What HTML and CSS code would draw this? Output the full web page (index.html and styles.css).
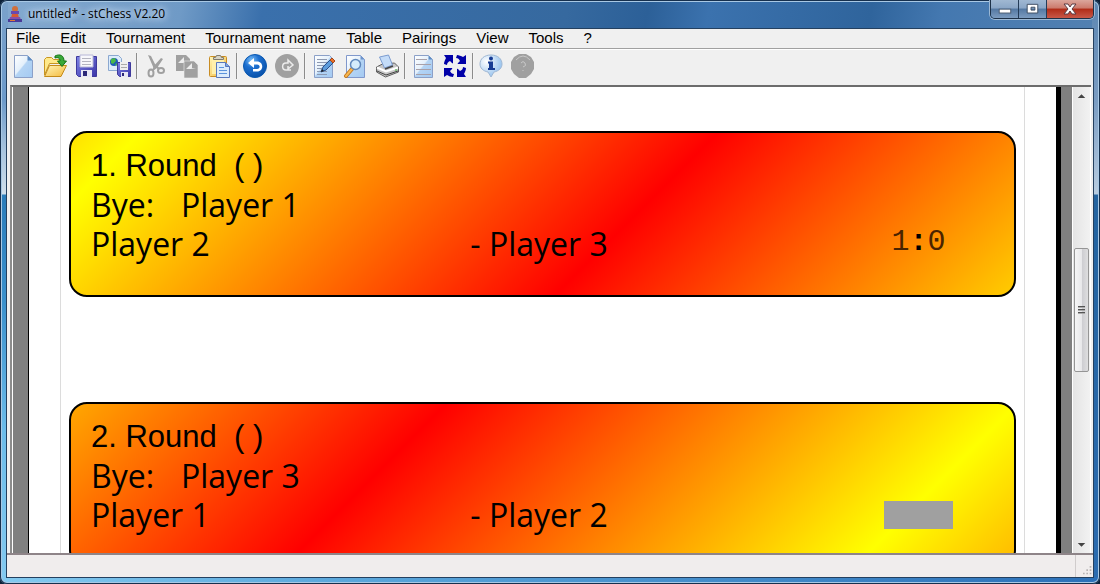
FILE: index.html
```html
<!DOCTYPE html>
<html lang="en">
<head>
<meta charset="utf-8">
<title>untitled* - stChess V2.20</title>
<link rel="stylesheet" href="styles.css">
</head>
<body>
<svg width="0" height="0" class="defs" aria-hidden="true">
  <defs>
    <linearGradient id="paper" x1="0" y1="0" x2="1" y2="1"><stop offset="0" stop-color="#fff"/><stop offset=".45" stop-color="#e4f0fb"/><stop offset=".5" stop-color="#b4d4f4"/><stop offset="1" stop-color="#a4caf2"/></linearGradient>
    <linearGradient id="gold" x1="0" y1="0" x2="1" y2="1"><stop offset="0" stop-color="#fff6b8"/><stop offset="1" stop-color="#f4b93c"/></linearGradient>
    <linearGradient id="violet" x1="0" y1="0" x2="1" y2="1"><stop offset="0" stop-color="#7f83e6"/><stop offset="1" stop-color="#3a35a8"/></linearGradient>
    <radialGradient id="ball" cx=".35" cy=".25" r=".8"><stop offset="0" stop-color="#7cc0f8"/><stop offset=".4" stop-color="#1d6fd0"/><stop offset="1" stop-color="#0850a8"/></radialGradient>
    <radialGradient id="bubble" cx=".3" cy=".3" r=".8"><stop offset="0" stop-color="#fff"/><stop offset="1" stop-color="#8cbcec"/></radialGradient>
  </defs>
</svg>
<div class="window">
  <header class="titlebar">
    <svg class="app-icon" viewBox="0 0 16 18" aria-hidden="true"><circle cx="8" cy="4" r="3" fill="#d0703c"/><path d="M4 6h8v3H4z" fill="#6a4ab0"/><path d="M5 9h6l1 4H4z" fill="#d85a34"/><path d="M3 12h10l1 3H2z" fill="#8a50a8"/><path d="M1 14h14v3H1z" fill="#4a3a98"/><path d="M3 15h5v1H3z" fill="#e07838"/></svg>
    <h1 class="title">untitled* - stChess V2.20</h1>
    <div class="controls">
      <button class="control" aria-label="Minimize"><svg viewBox="0 0 28 18"><rect x="8.500" y="9.500" width="12" height="4" fill="#fff" stroke="#4d5d72"/></svg></button>
      <button class="control" aria-label="Maximize"><svg viewBox="0 0 28 18"><path d="M8.500 4.500h11v9h-11zM12.500 7.500h4v3h-4z" fill="#fff" fill-rule="evenodd" stroke="#3d4d62"/></svg></button>
      <button class="control control-close" aria-label="Close"><svg viewBox="0 0 46 18"><path d="M17 4h4l2 3 2-3h4l-4 5 4 5h-4l-2-3-2 3h-4l4-5z" fill="#fff" stroke="#5a3a42"/></svg></button>
    </div>
  </header>
  <main class="client">
    <nav class="menu" aria-label="Main menu">
      <button>File</button><button>Edit</button><button>Tournament</button><button>Tournament name</button><button>Table</button><button>Pairings</button><button>View</button><button>Tools</button><button>?</button>
    </nav>
    <div class="toolbar" role="toolbar" aria-label="Tools">
      <button class="tool" aria-label="New"><svg viewBox="0 0 24 24"><path d="M3.500 1.500h13l5 5v17h-18z" fill="url(#paper)" stroke="#8ba0c8"/><path d="M16.500 1.500l5 5h-5z" fill="#5d8cc4"/></svg></button>
      <button class="tool" aria-label="Open"><svg viewBox="0 0 24 24"><path d="M1.500 21V5.500l2-2h5l2 2h7v4h-11z" fill="#ffe98a" stroke="#c89622"/><path d="M1.500 22.500l5-11h17l-5.500 11z" fill="url(#gold)" stroke="#c48a18"/><path d="M12 2c5-2.500 9-.5 9 5h2.500L19 12.500 14.500 7H17c0-3-2-4-5-3z" fill="#3aa83a" stroke="#157515"/></svg></button>
      <button class="tool" aria-label="Save"><svg viewBox="0 0 24 24"><path d="M1.500 2.500h20v20h-18l-2-2z" fill="url(#violet)" stroke="#3e399c"/><path d="M5 1h13v12H5z" fill="#f7f7fb" stroke="#b8b8d8"/><path d="M7 4.500h9M7 7.500h9M7 10.500h9" stroke="#b4b4c0"/><path d="M6 16h11v7H6z" fill="#e8e8f4"/><path d="M8 17h4v5H8z" fill="#2c2878"/></svg></button>
      <button class="tool" aria-label="Save as web page"><svg viewBox="0 0 24 24"><path d="M1.500 1.500h10l3 3v12h-13z" fill="#dcecfb" stroke="#8ba8d0"/><circle cx="7" cy="8" r="4" fill="#1c5cb4"/><path d="M4 5l4-1 1 3-3 3-2-1zM8 10l3-1-1 3z" fill="#48b848"/><path d="M10.500 8.500h13v14h-11l-2-2z" fill="url(#violet)" stroke="#3e399c"/><path d="M13 8h8v8h-8z" fill="#eee"/><path d="M14 10.500h6M14 13.500h6" stroke="#aaa"/><path d="M14 18h7v5h-7z" fill="#e8e8f4"/><path d="M15 19h2v3h-2z" fill="#2c2878"/></svg></button>
      <span class="sep"></span>
      <button class="tool" aria-label="Cut" disabled><svg viewBox="0 0 24 24"><path d="M5 1l3 1 5 10-2 3zM18 4l2 1-6 9-3 2-1-3z" fill="#a0a0a0"/><g fill="none" stroke="#a0a0a0" stroke-width="2"><ellipse cx="8" cy="19" rx="2.500" ry="3.500"/><ellipse cx="18" cy="16.500" rx="3" ry="2.500"/><path d="M10 16l3-4 3 3"/></g></svg></button>
      <button class="tool" aria-label="Copy" disabled><svg viewBox="0 0 24 24"><path d="M1 1h10l4 4v12H1z" fill="#a0a0a0"/><path d="M3 9l6-6v4h4l-5 2z" fill="#ededed"/><path d="M9 7h10l4 4v13H9z" fill="#a0a0a0" stroke="#eee" stroke-width=".6"/><path d="M11 15l6-6v5h4l-5 1z" fill="#ededed"/></svg></button>
      <button class="tool" aria-label="Paste"><svg viewBox="0 0 24 24"><rect x="2.500" y="2.500" width="17" height="20" rx="1" fill="url(#gold)" stroke="#c88c24"/><path d="M5 5h12v15H5z" fill="#fff0ac"/><path d="M6.500 5.500v-2h2l1-2h4l1 2h2v2z" fill="#d8d4c4" stroke="#807c70"/><path d="M9.500 8.500h9l4 4v11h-13z" fill="#dcecfc" stroke="#5878bc"/><path d="M18.500 8.500v4h4" fill="#7ca4e0" stroke="#5878bc"/><path d="M12 13.500h5M12 16.500h8M12 19.500h8" stroke="#5c94dc"/></svg></button>
      <span class="sep"></span>
      <button class="tool" aria-label="Undo"><svg viewBox="0 0 24 24"><circle cx="12" cy="12" r="11.500" fill="url(#ball)" stroke="#0a58b0"/><path d="M5 9l6-5v3.500h3c7 0 7 10 0 10h-4V15h4c3.500 0 3.500-4.500 0-4.500h-3V14z" fill="#fff"/></svg></button>
      <button class="tool" aria-label="Redo" disabled><svg viewBox="0 0 24 24"><circle cx="12" cy="12" r="12" fill="#a0a0a0"/><path d="M16 16h-5c-4.500 0-4.500-7 0-7h2V6l5 5-5 4v-3" fill="none" stroke="#ececec" stroke-width="1.500"/></svg></button>
      <span class="sep"></span>
      <button class="tool" aria-label="Edit"><svg viewBox="0 0 24 24"><path d="M3.500 1.500h15l3 3v19h-18z" fill="url(#paper)" stroke="#8ba0c8"/><path d="M6 5.500h10M6 8.500h10M6 11.500h8M6 14.500h6M6 17.500h10M6 20.500h10" stroke="#8c98b0"/><path d="M10 18l2-5 8-8 3 3-8 8z" fill="#5c9cdc" stroke="#28508c"/><path d="M19 6l2-2 3 3-2 2z" fill="#e8702c" stroke="#a84818"/><path d="M10 18l1-3 2 2z" fill="#222"/></svg></button>
      <button class="tool" aria-label="Print preview"><svg viewBox="0 0 24 24"><path d="M3.500 1.500h14l4 4v18h-18z" fill="url(#paper)" stroke="#8098cc"/><path d="M17.500 1.500l4 4h-4z" fill="#6c94cc"/><path d="M9 15l-6 7" stroke="#c47820" stroke-width="4" stroke-linecap="round"/><path d="M9 15l-6 7" stroke="#f8b850" stroke-width="2" stroke-linecap="round"/><circle cx="12.500" cy="10.500" r="5" fill="#d4ecfc" stroke="#6088bc" stroke-width="1.500"/></svg></button>
      <button class="tool" aria-label="Print"><svg viewBox="0 0 24 24"><path d="M1.500 13l6-3 12-1 4 4v5l-13 5-9-5z" fill="#c8c8c8" stroke="#606060"/><path d="M4.500 3l9-2 4 10-8 3z" fill="#c4dcf8" stroke="#7c9cd0"/><path d="M2 13.500l9 4 12-4" fill="none" stroke="#fff" stroke-width="2"/><path d="M2 17l9 4 12-4" fill="none" stroke="#444"/><path d="M10 15l8-3" stroke="#444" stroke-width="1.500"/><path d="M20 16h2" stroke="#40b840"/></svg></button>
      <span class="sep"></span>
      <button class="tool" aria-label="Report"><svg viewBox="0 0 24 24"><path d="M3.500 1.500h14l4 4v18h-18z" fill="url(#paper)" stroke="#8ba0c8"/><path d="M17.500 1.500l4 4h-4z" fill="#5d8cc4"/><path d="M5 5.500h11M5 10.500h15M5 15.500h15M5 20.500h15" stroke="#a8a0a8"/></svg></button>
      <button class="tool" aria-label="Refresh"><svg viewBox="0 0 24 24" fill="#0000a8"><path id="turn" d="M14 1c2 0 4 1 6 2l3-2v9h-9l3-3c-1-2-2-3-4-3z"/><use href="#turn" transform="rotate(90 12 12)"/><use href="#turn" transform="rotate(180 12 12)"/><use href="#turn" transform="rotate(270 12 12)"/><circle cx="12" cy="12" r="3.500" fill="#f0f0f0"/></svg></button>
      <span class="sep"></span>
      <button class="tool" aria-label="Info"><svg viewBox="0 0 24 24"><path d="M12 1c7 0 11 4 11 9 0 4-3 7-8 8l-3 5-3-5c-5-1-8-4-8-8 0-5 4-9 11-9z" fill="url(#bubble)" stroke="#a0b8d4"/><circle cx="12" cy="4.500" r="2" fill="#173c94"/><path d="M9 7.500h5V14h2v2H9v-2h1V9.500H9z" fill="#173c94"/></svg></button>
      <button class="tool" aria-label="Help" disabled><svg viewBox="0 0 24 24"><path d="M8 0h7l5 3 3 5v7l-3 5-5 4H8l-5-4-3-5V8l3-5z" fill="#a0a0a0"/><path d="M5 6q7-8 14 0M10 9q2-3 4 0t-2 4M12 16v1" fill="none" stroke="#c8c8c8"/></svg></button>
    </div>
    <section class="viewport" aria-label="Pairings sheet">
      <div class="desk">
        <div class="sheet">
          <div class="margins">
            <article class="round round-first">
              <h2 class="round-title">1. Round&nbsp; ( )</h2>
              <p class="line"><span class="bye">Bye:</span>Player 1</p>
              <div class="line pairing"><span>Player 2</span><span>- Player 3</span><span class="score">1<b>:</b>0</span></div>
            </article>
            <article class="round round-second">
              <h2 class="round-title">2. Round&nbsp; ( )</h2>
              <p class="line"><span class="bye">Bye:</span>Player 3</p>
              <div class="line pairing"><span>Player 1</span><span>- Player 2</span><input class="result" type="text" aria-label="Result of Player 1 against Player 2"></div>
            </article>
          </div>
        </div>
      </div>
      <div class="scrollbar">
        <button class="step" aria-label="Scroll up"><svg viewBox="0 0 16 18"><path d="M4 11l4-4 4 4z" fill="#444"/></svg></button>
        <div class="track"><div class="thumb"><i></i><i></i><i></i></div></div>
        <button class="step" aria-label="Scroll down"><svg viewBox="0 0 16 18"><path d="M4 8h8l-4 4z" fill="#444"/></svg></button>
      </div>
    </section>
    <footer class="status">
      <div class="grip"><svg viewBox="0 0 12 12" fill="#b8b4b4"><path d="M8 0h2v2H8zM4 4h2v2H4zM8 4h2v2H8zM0 8h2v2H0zM4 8h2v2H4zM8 8h2v2H8z"/></svg></div>
    </footer>
  </main>
</div>
</body>
</html>
```
FILE: styles.css
```css
* { box-sizing: border-box; }

body {
  margin: 0;
  background: #0c2038;
  font-family: "Liberation Sans", Arial, sans-serif;
  color: #000;
}

button {
  margin: 0;
  padding: 0;
  border: 0;
  background: none;
  font: inherit;
  color: inherit;
}

svg { display: block; }
.defs { position: absolute; }

/* Window frame */
.window {
  display: flex;
  flex-direction: column;
  height: 100vh;
  padding: 0 6px 6px;
  overflow: hidden;
  border-radius: 7px;
  box-shadow: inset 0 0 0 1px #16304e, inset 0 0 0 2px #a8c8e4;
  background:
    linear-gradient(90deg, #84caf0, #5ca8dc 30%, #2c70b8) bottom / 100% 7px no-repeat,
    linear-gradient(#7ba2cb, #6c9aca 100px, #a8c4de 150px, #cfdfec 194px, #2a7cba 195px, #3a90cc 300px, #6cbcea 430px, #84caf0) left / 8px 100% no-repeat,
    linear-gradient(#5c86b2, #7a9cc2 100px, #b8cce0 194px, #2464a0 195px, #2c6cb0) right / 8px 100% no-repeat,
    linear-gradient(100deg, #83a9cf, #6f9ac6 180px, #3a70ac 260px, #36699f 560px, #2c6098 640px, #3b72ae 700px, #2f649c 860px, #4478b0 930px, #5c86b2);
}

.titlebar {
  display: flex;
  align-items: flex-start;
  height: 28px;
  flex: none;
}

.app-icon { width: 16px; height: 18px; margin: 5px 0 0 1px; }

.title {
  flex: 1;
  margin: 6px 0 0 5px;
  font: 12px/16px "Open Sans", "Noto Sans", sans-serif;
  text-shadow: 0 0 6px #d4e4f4, 0 0 8px #c4d8ee, 0 0 10px #b4cce8;
}

.controls {
  display: flex;
  border: 1px solid #1d3148;
  border-top: 0;
  border-radius: 0 0 5px 5px;
  overflow: hidden;
  box-shadow: 0 0 0 1px #9cb8d4;
}

.control {
  width: 28px;
  height: 18px;
  border-right: 1px solid #243c58;
  background: linear-gradient(#a0b8d2, #8aa6c6 45%, #5478a2 50%, #7c9cc0);
}

.control-close {
  width: 46px;
  border-right: 0;
  background: linear-gradient(#dba69c, #cc7a6c 45%, #b02c18 50%, #c85848);
}

/* Client area */
.client {
  display: flex;
  flex: 1;
  flex-direction: column;
  min-height: 0;
  border: 1px solid #24405f;
  background: #f0f0f0;
}

.menu {
  display: flex;
  flex: none;
  gap: 20px;
  padding: 0 9px 1px;
  border-bottom: 1px solid #a0a0a0;
  font-size: 15px;
  line-height: 18px;
}

.toolbar {
  display: flex;
  flex: none;
  align-items: center;
  padding-bottom: 3px;
  border-top: 1px solid #fff;
}

.tool { width: 32px; height: 32px; padding: 4px; }
.tool svg { width: 24px; height: 24px; }

.sep {
  width: 4px;
  height: 26px;
  border-left: 1px solid #f0f0f0;
  background: linear-gradient(90deg, #8c8c8c 1px, #f8f8f8 1px, #f0f0f0 2px);
}

.viewport {
  display: flex;
  flex: 1;
  min-height: 0;
  margin: 0 2px 0 3px;
  overflow: hidden;
  border-top: 2px solid #6c6c6c;
  border-left: 2px solid #8c8c8c;
}

.desk {
  flex: 1;
  padding: 0 11px 0 15px;
  border-left: 1px solid #fff;
  background: #808080;
}

.sheet {
  padding: 0 31px;
  border-left: 1px solid #000;
  border-right: 5px solid #000;
  background: #fff;
}

.margins {
  display: flex;
  flex-direction: column;
  gap: 105px;
  padding: 44px 8px;
  border: solid #dcdcdc;
  border-width: 0 1px;
}

/* Round cards */
.round {
  padding: 13px 61px 32px 20px;
  border: 2px solid #000;
  border-radius: 18px;
  background-origin: border-box;
}

.round-first { background-image: linear-gradient(135deg, #f00 -352px, #ff0 52px, #f00 460px, #ff0 864px); }
.round-second { background-image: linear-gradient(135deg, #ff0 -136px, #f00 268px, #ff0 672px, #f00 1076px); }

.round-title {
  margin: 0;
  font-size: 31px;
  font-weight: 400;
  line-height: 39px;
}

.line {
  margin: 0;
  font: 32px/39px "Comic Sans MS", "Open Sans", "Noto Sans", sans-serif;
}

.bye { display: inline-block; width: 90px; }

.pairing {
  display: grid;
  grid-template-columns: 44% 1fr 69px;
  align-items: center;
}

.score {
  padding-bottom: 4px;
  color: #4a2400;
  font: 30px/30px "Liberation Mono", "Courier New", monospace;
  text-align: center;
}

.score b { color: #000; }

.result {
  width: 100%;
  height: 28px;
  padding: 0 4px;
  border: 0;
  background: #a0a0a0;
  font: 20px "Liberation Mono", monospace;
}

/* Scrollbar */
.scrollbar {
  display: flex;
  flex: none;
  flex-direction: column;
  width: 19px;
  padding: 0 1px;
  border-right: 1px solid #fff;
  border-left: 1px solid #fff;
  background: linear-gradient(90deg, #e4e4e4, #f2f2f2);
}

.step { height: 18px; flex: none; }
.step svg { width: 15px; height: 18px; }

.track {
  display: grid;
  flex: 1;
  grid-template-rows: 143fr 124fr 163fr;
}

.thumb {
  display: flex;
  flex-direction: column;
  grid-row: 2;
  align-items: center;
  justify-content: center;
  gap: 1px;
  border: 1px solid #959595;
  border-radius: 2px;
  background: linear-gradient(90deg, #f6f6f6, #e8e8ea 50%, #cdcdd1 55%, #dededf);
}

.thumb i {
  width: 7px;
  height: 2px;
  border-top: 1px solid #555;
  background: #aaa;
}

.status {
  display: flex;
  flex: none;
  justify-content: flex-end;
  height: 24px;
  border-top: 2px solid #8e8488;
  background: #f0eded;
}

.grip {
  width: 18px;
  padding: 11px 0 0 7px;
  border-left: 1px solid #d0cccc;
}

.grip svg { width: 10px; height: 10px; }
```
